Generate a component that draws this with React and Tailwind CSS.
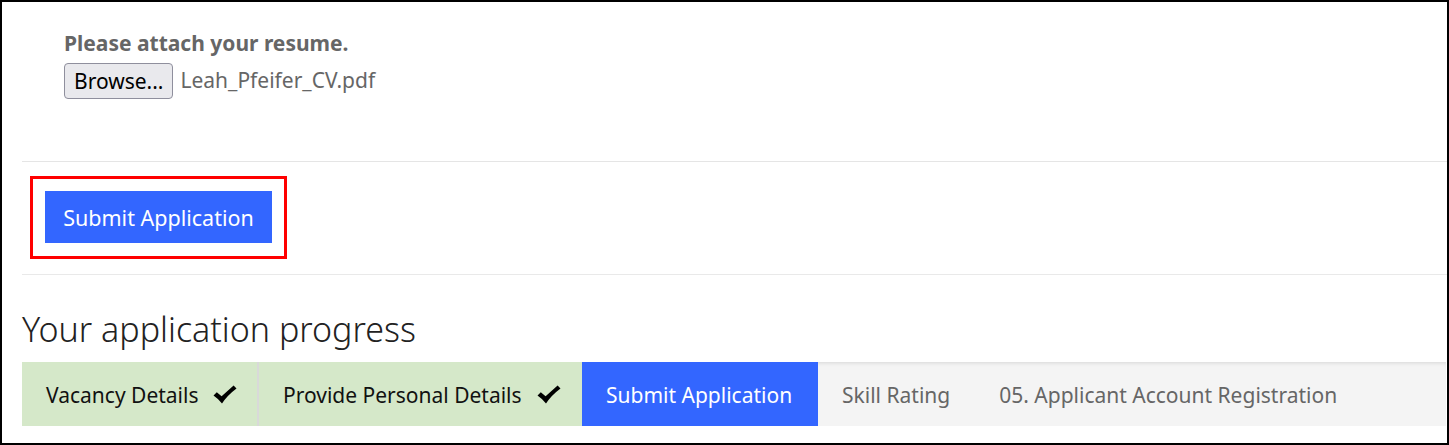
function Check() {
  return (
    <svg width="24" height="19" viewBox="0 0 24 19" className="ml-[15px] shrink-0 -mt-[2px]">
      <path d="M0.5 10.5 L3.8 7.2 L8.6 11.3 L20.6 0.5 L23.5 3.4 Q14 10.5 9 18.5 Q5 13.5 0.5 10.5 Z" fill="#000" />
    </svg>
  );
}

export default function App() {
  const font = { fontFamily: '"Noto Sans", "Open Sans", sans-serif' };
  return (
    <div className="w-[1449px] h-[445px] border-2 border-black bg-white overflow-hidden" style={font}>
      <div className="pl-[20px]">
        {/* attach section */}
        <div className="h-[159px] pl-[42px] pt-[28px]">
          <div className="text-[21px] leading-[26px] font-bold text-[#666666]">Please attach your resume.</div>
          <div className="mt-[7px] flex items-center gap-[7px]">
            <button className="h-[36px] px-[9px] rounded-[4px] border border-[#8f8f9d] bg-[#e9e9ed] text-[21px] text-black leading-none">Browse...</button>
            <span className="text-[21px] text-[#666666]">Leah_Pfeifer_CV.pdf</span>
          </div>
        </div>
        <div className="h-px bg-[#e5e5e5]"></div>
        {/* submit section */}
        <div className="h-[112px] pl-[8px] pt-[14px]">
          <div className="inline-block border-[3px] border-[#ff0000] pt-[12px] px-[12px] pb-[13px]">
            <button className="block w-[227px] h-[52px] pt-[2px] bg-[#3366ff] text-white text-[21.5px] leading-none">Submit Application</button>
          </div>
        </div>
        <div className="h-px bg-[#e9e9e9]"></div>
        {/* progress */}
        <h2 className="mt-[30px] mb-[9px] text-[34px] leading-[48px] font-light text-[#222222]">Your application progress</h2>
        <div className="h-[64px] pt-[3px] flex bg-[#f4f4f4] shadow-[inset_0_4px_4px_-3px_rgba(0,0,0,0.12)] text-[21px] mr-[1px]">
          <div className="w-[237px] -mt-[3px] bg-[#d5e8c9] border-r-2 border-[#d9d9d9] flex items-center pt-[3px] pl-[24px] text-[#111111]">
            <span>Vacancy Details</span>
            <Check />
          </div>
          <div className="w-[323px] -mt-[3px] bg-[#d5e8c9] flex items-center pt-[3px] pl-[24px] text-[#111111]">
            <span>Provide Personal Details</span>
            <Check />
          </div>
          <div className="w-[236px] -mt-[3px] bg-[#3366ff] flex items-center pt-[3px] pl-[24px] text-white">Submit Application</div>
          <div className="flex items-center pl-[24px] pr-[25px] text-[#666666]">Skill Rating</div>
          <div className="flex items-center pl-[24px] text-[#666666]">05. Applicant Account Registration</div>
        </div>
      </div>
    </div>
  );
}
